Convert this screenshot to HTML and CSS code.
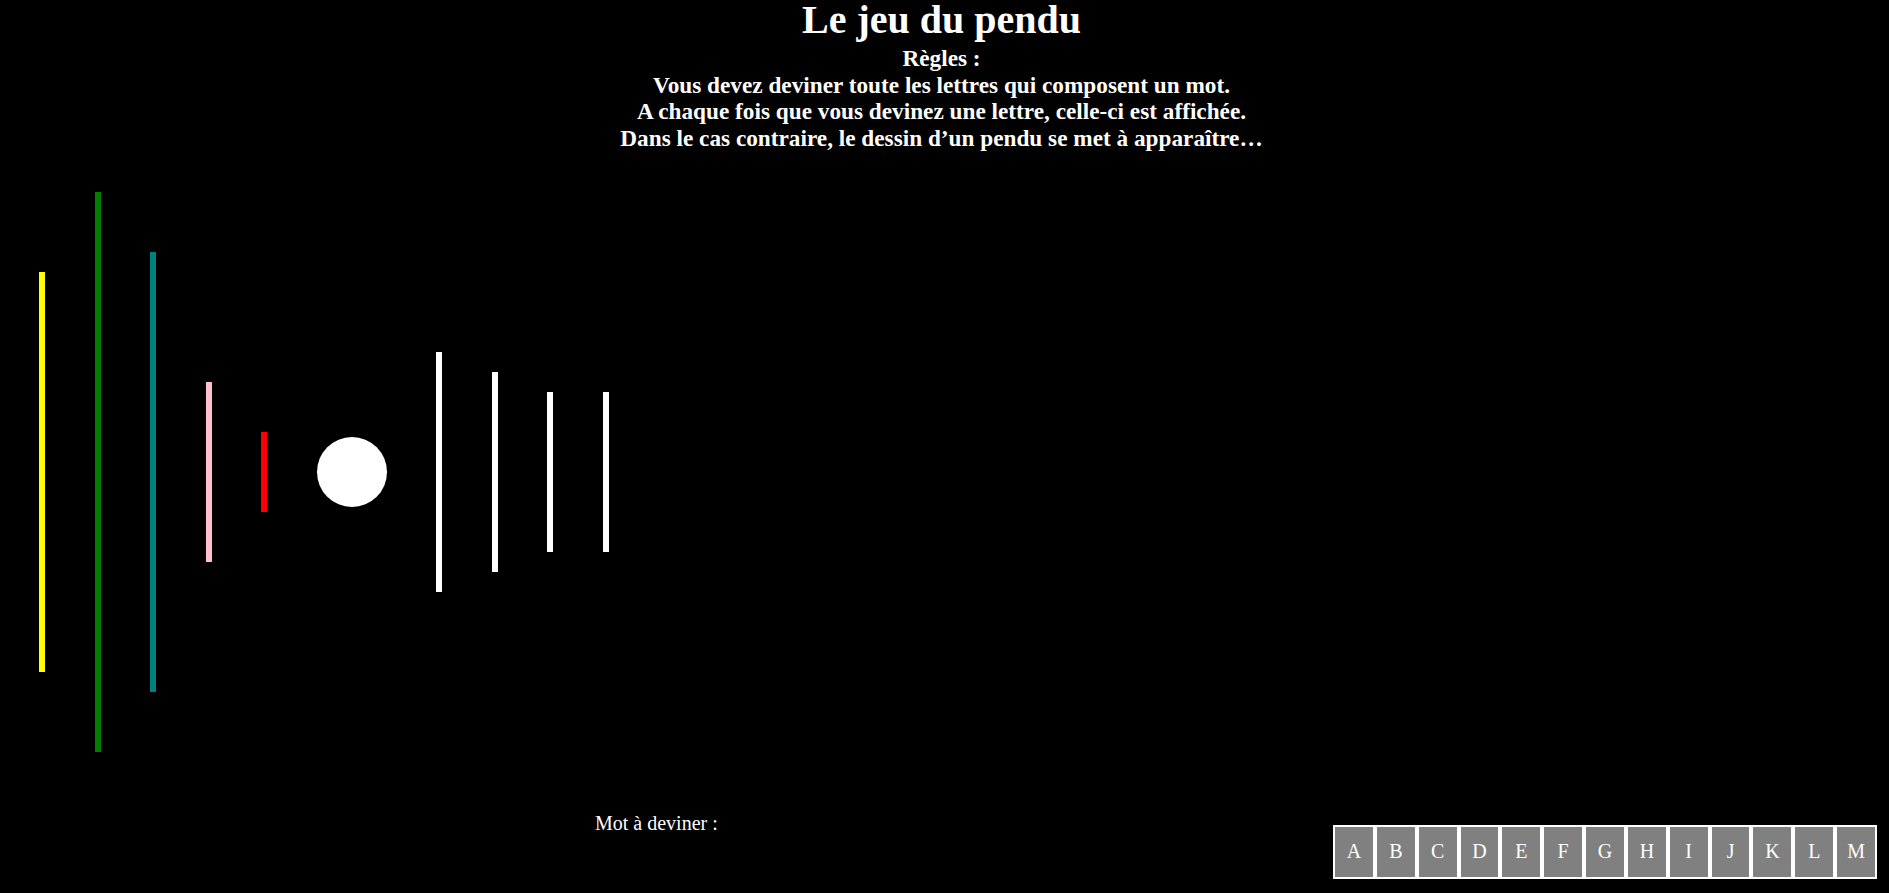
FILE: index.html
```html
<!DOCTYPE html>
<html lang="fr">
<head>
<meta charset="utf-8">
<title>Le jeu du pendu</title>
<link rel="stylesheet" href="styles.css">
</head>
<body>
<header class="header">
  <h1 class="title">Le jeu du pendu</h1>
  <p class="rules">Règles :<br>Vous devez deviner toute les lettres qui composent un mot.<br>A chaque fois que vous devinez une lettre, celle-ci est affichée.<br>Dans le cas contraire, le dessin d’un pendu se met à apparaître…</p>
</header>
<main class="stage">
  <div class="bar yellow" style="height:400px"></div>
  <div class="bar green" style="height:560px"></div>
  <div class="bar teal" style="height:440px"></div>
  <div class="bar pink" style="height:180px"></div>
  <div class="bar red" style="height:80px"></div>
  <div class="head"></div>
  <div class="bar white" style="height:240px"></div>
  <div class="bar white" style="height:200px"></div>
  <div class="bar white" style="height:160px"></div>
  <div class="bar white" style="height:160px"></div>
</main>
<section class="bottom">
  <p class="word">Mot à deviner :</p>
  <table class="letters">
    <tr>
      <td>A</td><td>B</td><td>C</td><td>D</td><td>E</td><td>F</td><td>G</td><td>H</td><td>I</td><td>J</td><td>K</td><td>L</td><td>M</td>
    </tr>
  </table>
</section>
</body>
</html>
```
FILE: styles.css
```css
html, body {
  margin: 0;
  padding: 0;
  background: #000;
  color: #fff;
  font-family: "Liberation Serif", "Times New Roman", serif;
}
body {
  width: 1889px;
  height: 893px;
  overflow: hidden;
}
.header {
  text-align: center;
  padding-right: 6px;
}
.title {
  margin: 0;
  font-size: 40px;
  line-height: 40px;
  font-weight: bold;
}
.rules {
  margin: 5px 0 0 0;
  font-size: 23.25px;
  line-height: 26.6px;
  font-weight: bold;
}
.stage {
  margin-top: 40.3px;
  height: 560px;
  display: flex;
  align-items: center;
  gap: 49.5px;
  padding-left: 39px;
}
.bar {
  width: 6px;
  flex: none;
}
.yellow { background: #ffff00; }
.green { background: #008000; }
.teal { background: #008080; }
.pink { background: #ffc0cb; }
.red { background: #ff0000; }
.white { background: #ffffff; }
.head {
  width: 70px;
  height: 70px;
  border-radius: 50%;
  background: #fff;
  flex: none;
}
.bottom {
  margin-top: 60px;
  display: flex;
  justify-content: space-between;
  align-items: flex-start;
  padding-left: 595px;
  padding-right: 12px;
}
.word {
  margin: 0;
  font-size: 20px;
}
.letters {
  margin-top: 13px;
  border-collapse: separate;
  border-spacing: 0;
  table-layout: fixed;
}
.letters td {
  width: 37.85px;
  height: 50px;
  padding: 0;
  border: 2px solid #fff;
  background: #808080;
  color: #fff;
  font-size: 20px;
  text-align: center;
  vertical-align: middle;
}
```
